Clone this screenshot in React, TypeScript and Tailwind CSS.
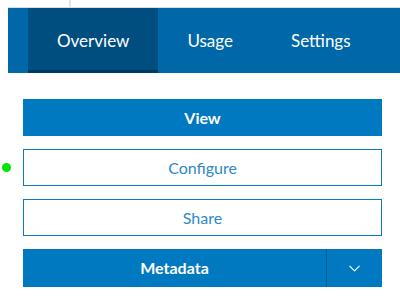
import { ChevronDown } from 'lucide-react'

const tabs = ['Overview', 'Usage', 'Settings']

export default function App() {
  return (
    <div className="relative h-[303px] w-[400px] overflow-hidden bg-white font-['Lato',sans-serif]">
      {/* top strip */}
      <div className="flex h-[7px]">
        <div className="ml-[69px] w-[2px] bg-[#e4e4e4]" />
      </div>
      <div className="ml-[8px] h-px bg-[#d8dde2]" />

      {/* tab bar */}
      <div className="ml-[8px] flex h-[65px] bg-[#0068a8] pl-[20px]">
        {tabs.map((tab, i) => (
          <div
            key={tab}
            className={
              i === 0
                ? 'flex items-center border-b-[3px] border-[#003b61] bg-[#004e80] px-[29px] pt-[3px] text-[17px] text-white'
                : 'flex items-center px-[29px] text-[17px] text-white'
            }
          >
            {tab}
          </div>
        ))}
      </div>

      {/* actions */}
      <div className="mt-[26px] ml-[23px] flex w-[359px] flex-col gap-[13px]">
        <div className="flex h-[37px] w-full items-center justify-center bg-[#0079c1] text-[16px] font-bold text-white">
          View
        </div>
        <div className="flex h-[37px] w-full items-center justify-center bg-[#0a7bc2] p-px">
          <div className="flex h-full w-full items-center justify-center bg-white text-[16px] text-[#2e88c9]">
            Configure
          </div>
        </div>
        <div className="flex h-[37px] w-full items-center justify-center bg-[#0a7bc2] p-px">
          <div className="flex h-full w-full items-center justify-center bg-white text-[16px] text-[#2e88c9]">
            Share
          </div>
        </div>
        <div className="flex h-[38px] w-full bg-[#0079c1]">
          <div className="flex flex-1 items-center justify-center text-[16px] font-bold text-white">Metadata</div>
          <div className="w-px bg-[#005d96]" />
          <div className="flex w-[55px] items-center justify-center text-white">
            <ChevronDown size={19} strokeWidth={1.4} />
          </div>
        </div>
      </div>

      {/* status dot */}
      <div className="absolute left-[2px] top-[163px] h-[9px] w-[9px] rounded-full bg-[#00e600]" />
    </div>
  )
}
